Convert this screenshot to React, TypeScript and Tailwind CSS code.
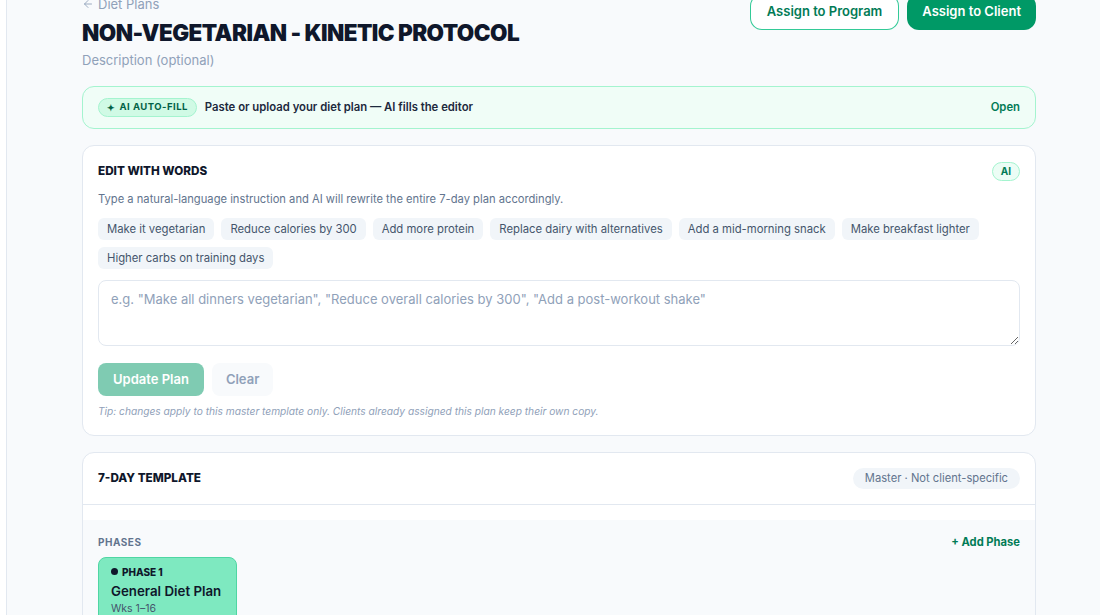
import { ArrowLeft } from 'lucide-react';

const QUICK_EDITS = [
  'Make it vegetarian',
  'Reduce calories by 300',
  'Add more protein',
  'Replace dairy with alternatives',
  'Add a mid-morning snack',
  'Make breakfast lighter',
  'Higher carbs on training days',
];

function PageHeader() {
  return (
    <div className="flex items-start justify-between -mt-[6px]">
      <div className="flex flex-col">
        <a className="flex items-center gap-1 text-[13px] leading-5 text-slate-400">
          <ArrowLeft size={12} strokeWidth={1.75} />
          <span>Diet Plans</span>
        </a>
        <h1 className="mt-[3px] text-[22.5px] leading-8 font-black tracking-tight text-slate-900">
          NON-VEGETARIAN - KINETIC PROTOCOL
        </h1>
        <p className="mt-[1px] text-[13px] leading-5 text-slate-400">Description (optional)</p>
      </div>
      <div className="flex items-center gap-2">
        <button className="h-[36px] px-4 rounded-xl border border-emerald-500/80 bg-white text-[13px] font-semibold text-emerald-700">
          Assign to Program
        </button>
        <button className="h-[36px] px-[15px] rounded-xl bg-emerald-600 text-[13px] font-semibold text-white">
          Assign to Client
        </button>
      </div>
    </div>
  );
}

function AutoFillBar() {
  return (
    <div className="mt-[16px] flex h-[43px] items-center justify-between rounded-xl border border-emerald-200 bg-[#f0fdf7] px-[15px]">
      <div className="flex items-center gap-2">
        <span className="flex h-[19px] items-center gap-1 rounded-full border border-emerald-200 bg-emerald-100 px-2 text-[9.5px] font-bold tracking-wider text-emerald-800">
          <span className="text-[9px]">✦</span>
          AI AUTO-FILL
        </span>
        <span className="text-[11.3px] font-semibold text-slate-800">
          Paste or upload your diet plan — AI fills the editor
        </span>
      </div>
      <button className="text-[11.3px] font-semibold text-emerald-700">Open</button>
    </div>
  );
}

function EditWithWords() {
  return (
    <section className="mt-4 rounded-xl border border-slate-200 bg-white px-[15px] py-4">
      <div className="flex h-[19px] items-center justify-between">
        <h2 className="text-[11.7px] font-extrabold text-slate-900">EDIT WITH WORDS</h2>
        <span className="flex h-[19px] items-center rounded-full border border-emerald-200 bg-emerald-50 px-2 text-[10px] font-bold text-emerald-700">
          AI
        </span>
      </div>
      <p className="mt-2.5 text-[11.2px] leading-4 text-slate-500">
        Type a natural-language instruction and AI will rewrite the entire 7-day plan accordingly.
      </p>
      <div className="mt-[11px] flex flex-wrap gap-[7px]">
        {QUICK_EDITS.map((q) => (
          <button
            key={q}
            className="h-[22px] rounded-md bg-slate-100 px-[9px] text-[11.3px] leading-4 text-slate-600"
          >
            {q}
          </button>
        ))}
      </div>
      <textarea
        className="mt-[11px] block h-[66px] w-full resize-y rounded-lg border border-slate-200 px-3 py-2 text-[13px] leading-5 text-slate-700 placeholder:text-slate-400 outline-none"
        placeholder={'e.g. "Make all dinners vegetarian", "Reduce overall calories by 300", "Add a post-workout shake"'}
      />
      <div className="mt-[17px] flex items-center gap-2">
        <button className="h-[33px] rounded-lg bg-emerald-600/50 px-[15px] text-[13px] font-semibold text-white">
          Update Plan
        </button>
        <button className="h-[33px] rounded-lg bg-slate-50 px-[14px] text-[13px] font-semibold text-slate-400">
          Clear
        </button>
      </div>
      <p className="mt-[7px] text-[10.2px] leading-4 italic text-slate-400">
        Tip: changes apply to this master template only. Clients already assigned this plan keep their own copy.
      </p>
    </section>
  );
}

function TemplateCard() {
  return (
    <section className="mt-4 rounded-xl border border-slate-200 bg-white">
      <div className="flex h-[52px] items-center justify-between border-b border-slate-200 px-[15px]">
        <h2 className="text-[11.7px] font-extrabold text-slate-900">7-DAY TEMPLATE</h2>
        <span className="flex h-[21px] items-center rounded-full bg-slate-100 px-3 text-[11.2px] text-slate-500">
          Master · Not client-specific
        </span>
      </div>
      <div className="mt-[15px] bg-slate-50 px-[15px] pt-[14px] pb-8">
        <div className="flex items-center justify-between">
          <span className="text-[10px] font-bold tracking-wider text-slate-500">PHASES</span>
          <button className="text-[11.2px] font-bold text-emerald-700">+ Add Phase</button>
        </div>
        <div className="mt-[6px] w-[139px] rounded-lg border border-[#4fd6a3] bg-[#7ee9c0] px-3 pt-[6px] pb-2">
          <div className="flex items-center gap-1 text-[10px] font-extrabold leading-4 text-slate-900">
            <span className="h-[7px] w-[7px] rounded-full bg-slate-900" />
            PHASE 1
          </div>
          <div className="mt-[1px] text-[13.3px] font-semibold leading-5 text-slate-900">General Diet Plan</div>
          <div className="text-[10.5px] leading-4 text-slate-600">Wks 1–16</div>
        </div>
      </div>
    </section>
  );
}

export default function App() {
  return (
    <div
      className="flex h-[615px] overflow-hidden bg-slate-50"
      style={{ fontFamily: 'Inter, "Noto Sans", sans-serif' }}
    >
      <aside className="w-[7px] shrink-0 border-r border-slate-200 bg-white" />
      <main className="flex-1 pl-[75px]">
        <div className="w-[954px]">
          <PageHeader />
          <AutoFillBar />
          <EditWithWords />
          <TemplateCard />
        </div>
      </main>
    </div>
  );
}
